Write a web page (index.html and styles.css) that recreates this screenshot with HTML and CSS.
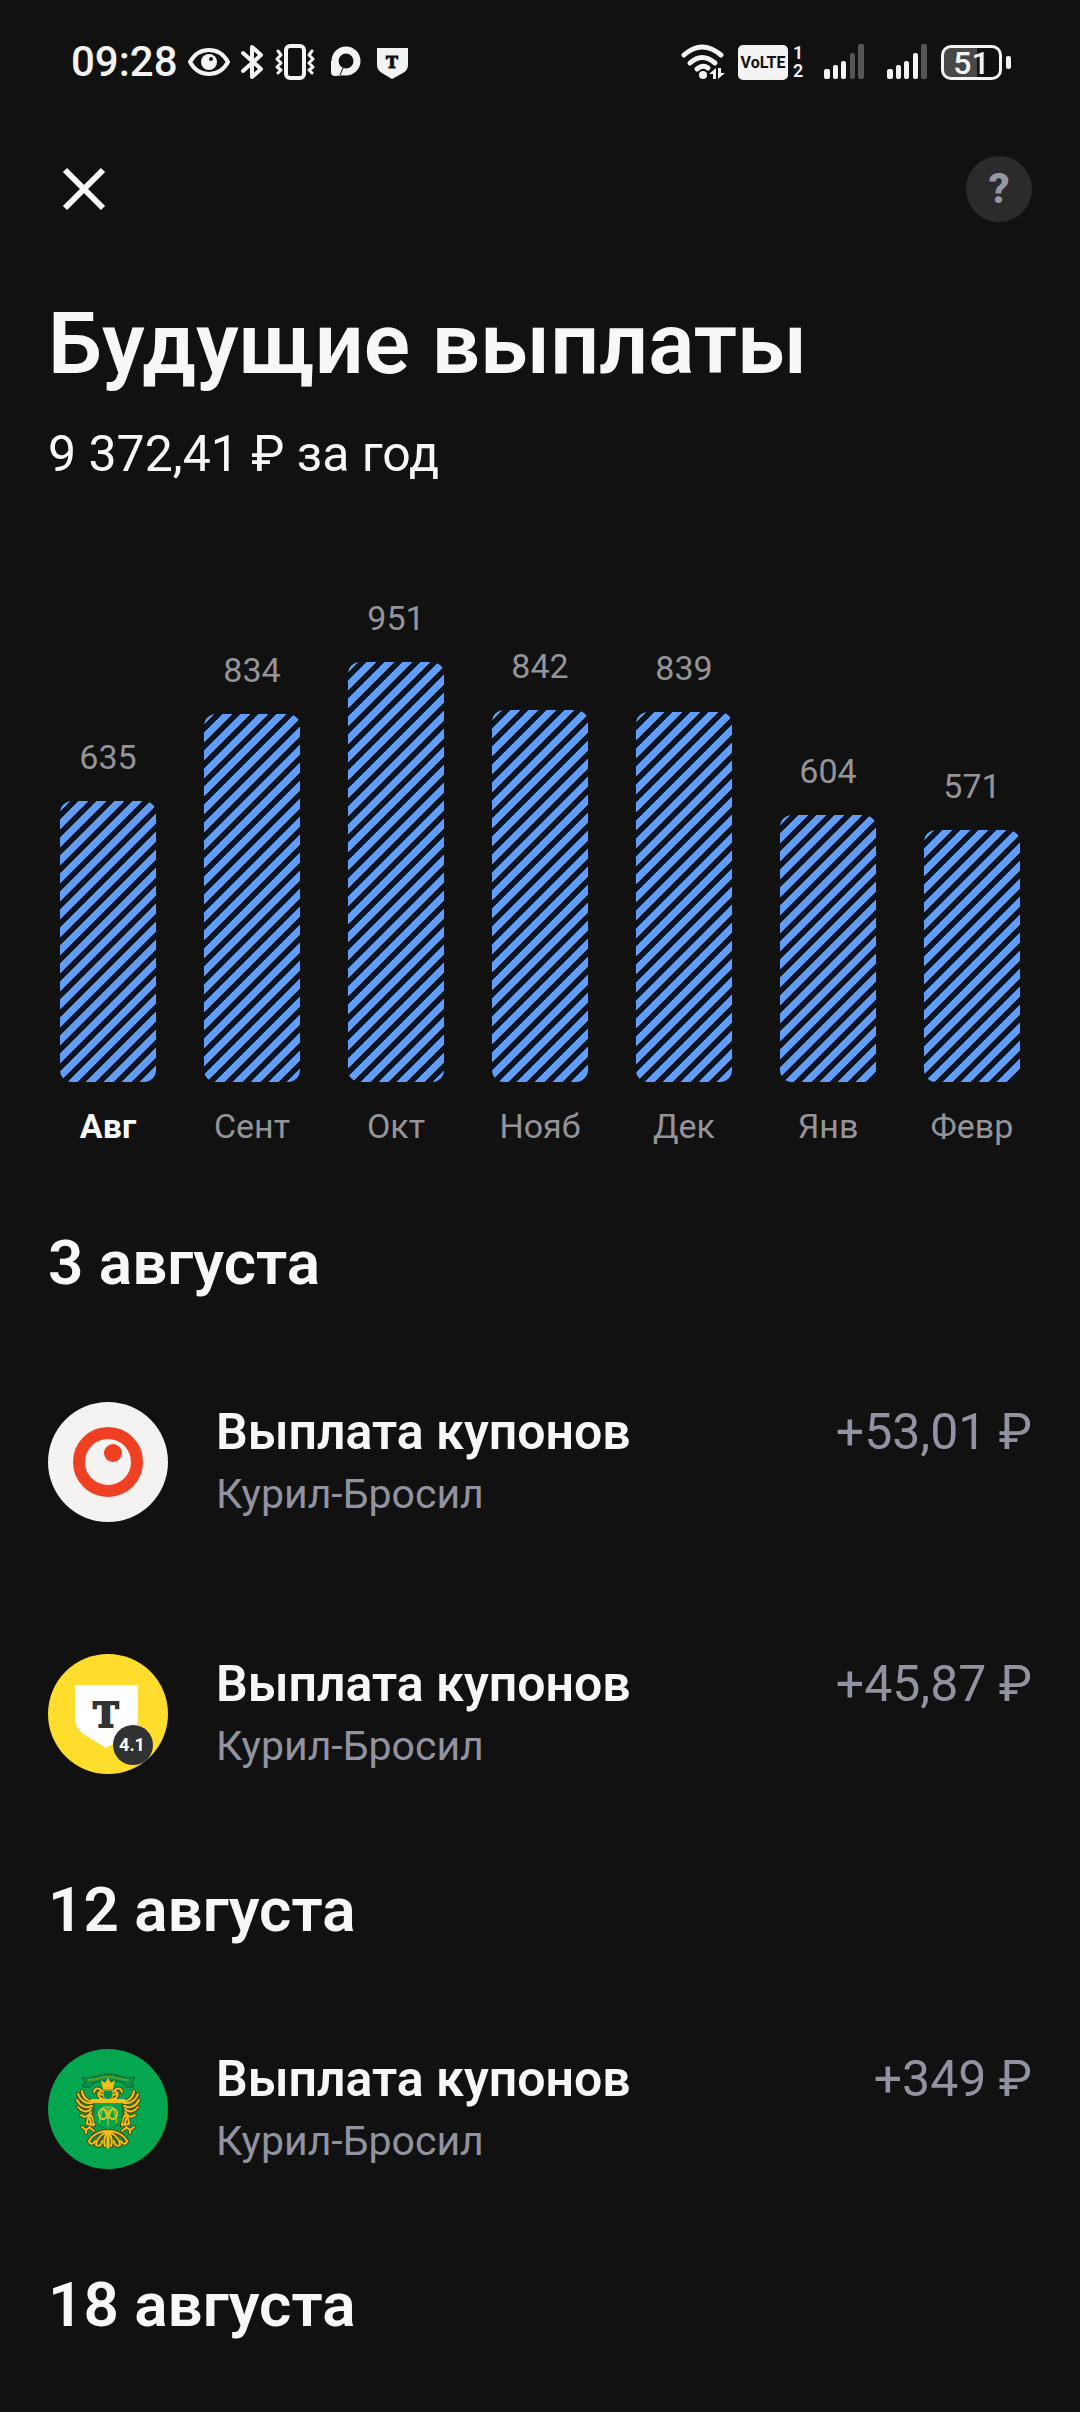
FILE: index.html
```
<!DOCTYPE html>
<html lang="ru">
	<head>
		<meta charset="UTF-8">
		<meta name="viewport" content="width=device-width, initial-scale=1">
		<title>Будущие выплаты</title>
		<link rel="stylesheet" href="styles.css">
	</head>
	<body>
		<div class="status">
			<div class="status-left">
				<span class="time">09:28</span>
				<svg width="42" height="36" viewBox="0 0 42 36">
					<path d="M2 18C11 2 31 2 40 18C31 34 11 34 2 18Z" fill="none" stroke="#f3f3f3" stroke-width="4" stroke-linejoin="round"/>
					<circle cx="21" cy="18" r="8" fill="#f3f3f3"/>
					<circle cx="23" cy="15" r="2" fill="#111"/>
				</svg>
				<svg width="23" height="36" viewBox="0 0 23 36">
					<path d="M2 9L20 25L11 33V3L20 11L2 27" fill="none" stroke="#f3f3f3" stroke-width="4" stroke-linejoin="round" stroke-linecap="round"/>
				</svg>
				<svg width="40" height="36" viewBox="0 0 40 36">
					<rect x="11" y="2" width="18" height="32" rx="4" fill="none" stroke="#f3f3f3" stroke-width="4"/>
					<path d="M3 7L6 11L2 15L6 19L2 23L6 26L3 29M37 7L34 11L38 15L34 19L38 23L34 26L37 29" fill="none" stroke="#f3f3f3" stroke-width="3" stroke-linejoin="round" stroke-linecap="round"/>
				</svg>
				<svg width="37" height="36" viewBox="0 0 37 36">
					<circle cx="20" cy="17" r="11" fill="none" stroke="#f3f3f3" stroke-width="7"/>
					<path d="M5 17V28C5 31 7 32 9 32L20 31L13 25L12 17Z" fill="#f3f3f3"/>
					<path d="M14 31L17 24" stroke="#111" stroke-width="1"/>
				</svg>
				<svg width="38" height="36" viewBox="0 0 38 36">
					<path d="M3 4H34V21C34 25 32 27 29 29L18 35L8 29C5 27 3 25 3 21Z" fill="#f3f3f3"/>
					<text x="18" y="24" class="mini-t">T</text>
				</svg>
			</div>
			<div class="status-right">
				<svg width="46" height="36" viewBox="0 0 46 36">
					<g fill="none" stroke="#f3f3f3" stroke-width="5" stroke-linecap="round">
						<path d="M3 11Q21 -5 40 11"/>
						<path d="M9 19Q21 8 34 19"/>
						<path d="M16 25Q22 20 27 24"/>
					</g>
					<circle cx="22" cy="31" r="4" fill="#f3f3f3"/>
					<path d="M35 24V35H32V30H28ZM37 35V24H40V29H44Z" fill="#f3f3f3"/>
				</svg>
				<div class="net">
					<span class="volte">VoLTE</span>
					<span class="sims"><span>1</span><span>2</span></span>
				</div>
				<div class="signals">
					<svg width="40" height="36" viewBox="0 0 40 36" fill="#f3f3f3">
						<rect x="0" y="25" width="6" height="10" rx="2"/>
						<rect x="9" y="21" width="5" height="14" rx="2"/>
						<rect x="17" y="17" width="5" height="18" rx="2"/>
						<rect x="26" y="9" width="5" height="26" rx="2" fill="#555"/>
						<rect x="34" y="0" width="6" height="35" rx="2" fill="#555"/>
					</svg>
					<svg width="40" height="36" viewBox="0 0 40 36" fill="#f3f3f3">
						<rect x="0" y="25" width="6" height="10" rx="2"/>
						<rect x="9" y="21" width="5" height="14" rx="2"/>
						<rect x="17" y="17" width="5" height="18" rx="2"/>
						<rect x="26" y="9" width="5" height="26" rx="2"/>
						<rect x="34" y="0" width="6" height="35" rx="2" fill="#555"/>
					</svg>
				</div>
				<div class="battery"><span>51</span></div>
			</div>
		</div>

		<div class="topbar">
			<button class="close" type="button" aria-label="Закрыть">
				<svg width="72" height="66" viewBox="0 0 72 66">
					<path d="M17 14L55 52M55 14L17 52" stroke="#f6f7f8" stroke-width="6"/>
				</svg>
			</button>
			<button class="help" type="button" aria-label="Помощь">?</button>
		</div>

		<div class="head">
			<h1>Будущие выплаты</h1>
			<p>9 372,41 ₽ за год</p>
		</div>

		<ul class="chart">
			<li class="current"><span>635</span><div class="bar" style="height:281px"></div><b>Авг</b></li>
			<li><span>834</span><div class="bar" style="height:368px"></div><b>Сент</b></li>
			<li><span>951</span><div class="bar" style="height:420px"></div><b>Окт</b></li>
			<li><span>842</span><div class="bar" style="height:372px"></div><b>Нояб</b></li>
			<li><span>839</span><div class="bar" style="height:370px"></div><b>Дек</b></li>
			<li><span>604</span><div class="bar" style="height:267px"></div><b>Янв</b></li>
			<li><span>571</span><div class="bar" style="height:252px"></div><b>Февр</b></li>
		</ul>

		<div class="list">
			<h2>3 августа</h2>
			<ul>
				<li class="item">
					<svg class="logo" viewBox="0 0 120 120">
						<circle cx="60" cy="60" r="60" fill="#f5f3f1"/>
						<circle cx="60" cy="60" r="29" fill="none" stroke="#f04023" stroke-width="12"/>
						<circle cx="65" cy="51" r="9" fill="#f04023"/>
					</svg>
					<div class="info">
						<h3>Выплата купонов</h3>
						<p>Курил-Бросил</p>
					</div>
					<div class="sum">+53,01 ₽</div>
				</li>
				<li class="item">
					<svg class="logo" viewBox="0 0 120 120">
						<circle cx="60" cy="60" r="60" fill="#ffdd2d"/>
						<path d="M27 31H90V62C90 72 87 76 80 81L58 94L37 81C30 76 27 72 27 62Z" fill="#fff"/>
						<text x="58" y="73" class="big-t">T</text>
						<circle cx="85" cy="91" r="20" fill="#313234"/>
						<text x="84" y="97" class="badge">4.1</text>
					</svg>
					<div class="info">
						<h3>Выплата купонов</h3>
						<p>Курил-Бросил</p>
					</div>
					<div class="sum">+45,87 ₽</div>
				</li>
			</ul>

			<h2>12 августа</h2>
			<ul>
				<li class="item">
					<svg class="logo" viewBox="0 0 120 120">
						<defs>
							<!-- левая половина орла: голова, крыло, лапа, хвост -->
							<g id="half">
								<path d="M57 51L52 49C49 46 50 43 54 42C51 38 47 39 46 43M56 46L51 45"/>
								<path d="M46 52C40 53 35 49 34 42M44 54C38 55 32 51 30 45M44 57C38 60 32 57 29 51M43 60C39 64 34 63 30 58M43 63C40 68 37 69 33 66"/>
								<path d="M43 66C40 68 39 71 39 75L46 76C46 72 45 69 43 66M42 70L43 74M42 78L38 81L34 78M38 81L38 84M42 79L46 82"/>
								<path d="M58 82C52 82 44 86 41 92C42 96 46 95 47 92M58 83C53 86 48 91 48 96C51 98 54 96 54 92M59 83C56 89 55 93 57 97"/>
							</g>
						</defs>
						<circle cx="60" cy="60" r="60" fill="#04a650"/>
						<path d="M34 28C42 31 50 25 60 25C70 25 78 31 87 28L84 33L86 37C80 40 77 38 76 34C68 31 53 31 45 34C44 38 40 40 34 37L37 33Z" fill="#04934a" stroke="#0b5a2b" stroke-width="1"/>
						<path d="M40 31C48 31 53 28 60 28C68 28 72 31 81 31" fill="none" stroke="#8fae25" stroke-width="2" stroke-dasharray="1 1"/>
						<g fill="none" stroke="#4d4a10" stroke-width="4" stroke-linecap="round">
							<use href="#half"/>
							<use href="#half" transform="translate(120 0) scale(-1 1)"/>
						</g>
						<g fill="none" stroke="#f3c01b" stroke-width="2" stroke-linecap="round" stroke-linejoin="round">
							<use href="#half"/>
							<use href="#half" transform="translate(120 0) scale(-1 1)"/>
							<path d="M60 82V98" stroke-width="3"/>
						</g>
						<path d="M53 31L57 34L60 29L63 34L67 31L65 40H55Z" fill="#f3c01b"/>
						<path d="M55 41H65V46C65 49 62 50 60 51C58 50 55 49 55 46Z" fill="#04934a" stroke="#f3c01b" stroke-width="1"/>
						<path d="M46 52H74V71C74 76 66 77 60 81C54 77 46 76 46 71Z" fill="#04a650" stroke="#27691d" stroke-width="1"/>
						<path d="M43 52H77" stroke="#f3c01b" stroke-width="4"/>
						<g fill="none" stroke="#d9c325" stroke-width="2">
							<ellipse cx="55" cy="65" rx="4" ry="5"/>
							<ellipse cx="65" cy="65" rx="4" ry="5"/>
							<path d="M60 58V77M56 58H64M51 74L55 58L60 70L65 58L69 74" stroke-width="1"/>
						</g>
					</svg>
					<div class="info">
						<h3>Выплата купонов</h3>
						<p>Курил-Бросил</p>
					</div>
					<div class="sum">+349 ₽</div>
				</li>
			</ul>

			<h2>18 августа</h2>
		</div>
	</body>
</html>
```
FILE: styles.css
```
*{
	margin: 0;
	padding: 0;
	box-sizing: border-box;
}
body{
	background: #111;
	color: #f6f7f8;
	font-family: Roboto, "Noto Sans", sans-serif;
}
ul{
	list-style: none;
}
svg{
	display: block;
	flex-shrink: 0;
}
button{
	border: none;
	background: none;
	cursor: pointer;
	font-family: inherit;
}

/* строка состояния */
.status{
	display: flex;
	justify-content: space-between;
	align-items: center;
	height: 124px;
	padding: 0 70px;
	color: #f3f3f3;
}
.status-left{
	display: flex;
	align-items: center;
	gap: 11px;
}
.status-right{
	display: flex;
	align-items: center;
	gap: 11px;
}
.time{
	width: 107px;
	font-size: 42px;
	line-height: 48px;
	padding-left: 1px;
	font-weight: 500;
}
.net{
	display: flex;
	align-items: center;
	gap: 5px;
	margin-right: 11px;
}
.volte{
	width: 50px;
	height: 35px;
	border-radius: 5px;
	background: #f3f3f3;
	color: #111;
	font-size: 16px;
	font-weight: 700;
	line-height: 35px;
	text-align: center;
}
.sims{
	display: flex;
	flex-direction: column;
	width: 9px;
	font-size: 18px;
	font-weight: 600;
	line-height: 18px;
}
.signals{
	display: flex;
	gap: 23px;
	margin-right: 3px;
}
.battery{
	position: relative;
	width: 61px;
	height: 35px;
	margin-right: 8px;
	border: 3px solid #f3f3f3;
	border-radius: 10px;
	background: linear-gradient(90deg, #484848 60%, #111 60%);
	font-size: 32px;
	font-weight: 500;
	line-height: 30px;
	text-align: center;
}
.battery::after{
	content: "";
	position: absolute;
	top: 8px;
	right: -12px;
	width: 5px;
	height: 13px;
	border-radius: 2px;
	background: #f3f3f3;
}
.mini-t{
	font: bold 16px "DejaVu Serif", serif;
	text-anchor: middle;
	fill: #111;
	stroke: #111;
	stroke-width: 1px;
}

.topbar{
	display: flex;
	justify-content: space-between;
	padding: 32px 48px 0;
}
.close{
	width: 72px;
	height: 66px;
}
.help{
	width: 66px;
	height: 66px;
	border-radius: 50%;
	background: #2b2b2b;
	color: #9697a3;
	font-size: 42px;
	font-weight: 800;
	line-height: 66px;
}

.head{
	padding: 70px 48px 0;
}
.head h1{
	font-size: 86px;
	font-weight: 600;
	line-height: 104px;
}
.head p{
	margin-top: 28px;
	font-size: 50px;
	line-height: 60px;
}

/* график по месяцам */
.chart{
	display: flex;
	align-items: flex-end;
	margin-top: 114px;
	padding: 0 36px 47px;
}
.chart li{
	flex: 1;
	display: flex;
	flex-direction: column;
	gap: 24px;
	text-align: center;
	font-size: 34px;
	line-height: 40px;
	color: #949499;
}
.chart b{
	font-weight: 400;
}
.chart .current b{
	color: #f6f7f8;
	font-weight: 700;
}
.bar{
	margin: 0 24px;
	border-radius: 12px;
	background-image: linear-gradient(135deg, #5f9df7 30%, #0b1420 30%, #0b1420 50%, #5f9df7 50%, #5f9df7 80%, #0b1420 80%);
	background-size: 18px 18px;
}

/* список выплат */
.list{
	padding: 0 48px;
}
.list h2{
	padding: 34px 0 37px;
	font-size: 62px;
	font-weight: 600;
	line-height: 72px;
}
.item{
	display: flex;
	gap: 48px;
	padding: 66px 0;
}
.logo{
	width: 120px;
	height: 120px;
}
.info{
	flex: 1;
}
.info h3{
	font-size: 50px;
	font-weight: 600;
	line-height: 60px;
}
.info p{
	margin-top: 4px;
	font-size: 41px;
	line-height: 56px;
	color: #9293a0;
}
.sum{
	font-size: 50px;
	line-height: 60px;
	color: #9293a0;
}
.big-t{
	font: bold 34px "DejaVu Serif", serif;
	text-anchor: middle;
	fill: #333;
	stroke: #333;
	stroke-width: 2px;
}
.badge{
	font-size: 18px;
	font-weight: 700;
	text-anchor: middle;
	fill: #fff;
}
```
